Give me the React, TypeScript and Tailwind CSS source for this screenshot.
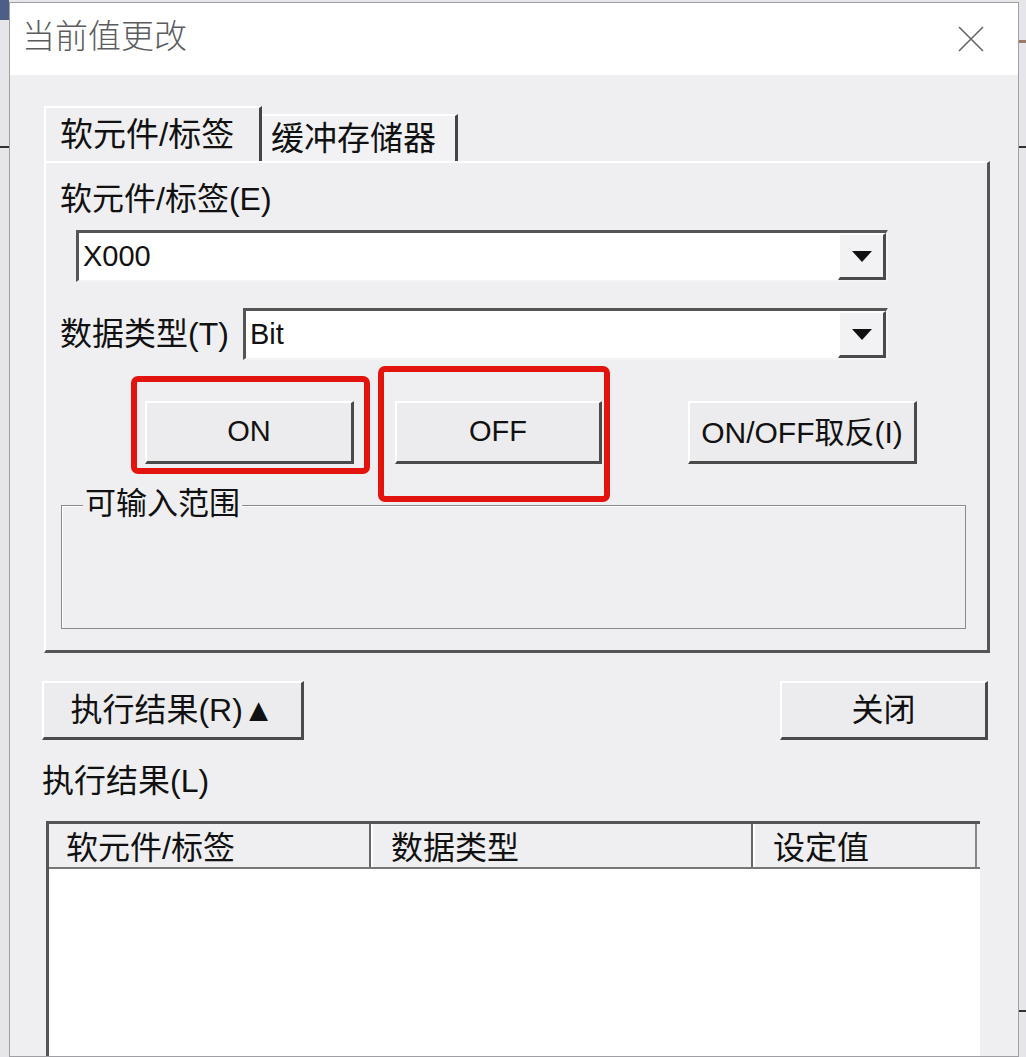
import React from 'react'

// ── Bevel helpers ─────────────────────────────────────────────

const raised = 'border-t-2 border-l-2 border-b-[3px] border-r-[3px] border-t-white border-l-white border-b-[#4a4a4a] border-r-[#4a4a4a]'
const sunken = 'border-t-[3px] border-l-[3px] border-b-2 border-r-2 border-t-[#555] border-l-[#555] border-b-[#f4f4f6] border-r-[#f4f4f6]'

const font = "font-['Liberation_Sans','Noto_Sans_CJK_SC',sans-serif]"

function Btn({ label, className }: { label: React.ReactNode; className: string }) {
  return (
    <div className={`flex items-center justify-center bg-[#ececee] text-[#111] ${raised} ${className}`}>
      {label}
    </div>
  )
}

function Combo({ value, className }: { value: string; className: string }) {
  return (
    <div className={`flex items-stretch bg-white ${sunken} ${className}`}>
      <div className="flex-1 flex items-center pl-[4px] text-[29px] text-[#111]">{value}</div>
      <div className={`w-[48px] flex items-center justify-center bg-[#f2f2f4] ${raised}`}>
        <svg width="20" height="11" viewBox="0 0 20 11"><path d="M0 0 H20 L10 11 Z" fill="#111" /></svg>
      </div>
    </div>
  )
}

// ── Dialog ────────────────────────────────────────────────────

export default function App() {
  return (
    <div className={`relative w-[1026px] h-[1057px] overflow-hidden bg-[#e6e6ea] pl-[9px] pr-[7px] pt-[2px] ${font}`}>
      {/* bits of the window behind */}
      <div className="absolute left-0 top-[146px] w-[9px] h-[2px] bg-[#333]" />
      <div className="absolute right-0 top-[40px] w-[7px] h-[3px] bg-[#9a7a6a]" />
      <div className="absolute right-0 top-[146px] w-[7px] h-[2px] bg-[#333]" />
      <div className="absolute right-0 top-[1010px] w-[7px] h-[2px] bg-[#333]" />
      <div className="absolute left-0 top-0 w-[9px] h-[20px] bg-[#4d5f86]" />

      <div className="h-full flex flex-col border border-[#a0a0a4] bg-[#efeff1]">
        {/* Title bar */}
        <div className="h-[72px] shrink-0 bg-white flex items-center justify-between pl-[12px] pr-[34px]">
          <span className="text-[33px] font-light text-[#5c5c60] pb-[4px]">当前值更改</span>
          <svg width="26" height="26" viewBox="0 0 26 26"><path d="M1 1 L25 25 M25 1 L1 25" stroke="#666" strokeWidth="1.6" /></svg>
        </div>

        <div className="flex-1 flex flex-col pl-[32px] pr-[30px] pt-[31px]">
          {/* Tabs */}
          <div className="flex items-end ml-[2px] h-[55px]">
            <div className="h-[55px] w-[218px] flex items-center pl-[14px] border-t-2 border-l-2 border-r-[3px] border-t-white border-l-white border-r-[#444] bg-[#efeff1] text-[33px] text-[#111]">
              软元件/标签
            </div>
            <div className="h-[47px] w-[196px] flex items-center pl-[9px] border-t-2 border-r-[3px] border-t-white border-r-[#444] bg-[#f2f2f4] text-[33px] text-[#111]">
              缓冲存储器
            </div>
          </div>

          {/* Tab panel */}
          <div className="ml-[2px] w-[946px] h-[492px] shrink-0 flex flex-col border-t-2 border-l-2 border-r-[3px] border-b-[3px] border-t-white border-l-white border-r-[#555] border-b-[#555] pt-[18px] pl-[14px] text-[#111]">
            <div className="h-[36px] leading-[36px] text-[32px]">软元件/标签(E)</div>
            <Combo value="X000" className="mt-[13px] ml-[16px] w-[812px] h-[52px]" />

            <div className="mt-[26px] flex items-center h-[52px]">
              <div className="w-[183px] text-[32px]">数据类型(T)</div>
              <Combo value="Bit" className="w-[645px] h-[52px]" />
            </div>

            <div className="mt-[41px] flex items-center pl-[85px] h-[63px]">
              <Btn label={<span className="text-[29px]">ON</span>} className="w-[209px] h-[63px]" />
              <Btn label={<span className="text-[29px]">OFF</span>} className="ml-[41px] w-[207px] h-[63px]" />
              <Btn label={<span className="text-[30px]">ON/OFF取反(I)</span>} className="ml-[86px] w-[229px] h-[63px]" />
            </div>

            {/* Group box */}
            <div className="relative mt-[41px] ml-[1px] w-[905px] h-[124px] border border-[#8a8a8e] shadow-[inset_1px_1px_0_#fff]">
              <span className="absolute left-[21px] top-[-20px] px-[2px] bg-[#efeff1] text-[31px] leading-[36px]">可输入范围</span>
            </div>
          </div>

          {/* Bottom buttons */}
          <div className="mt-[28px] flex items-center justify-between h-[59px]">
            <Btn label={<span className="text-[32px]">执行结果(R)▲</span>} className="w-[262px] h-[59px]" />
            <Btn label={<span className="text-[32px]">关闭</span>} className="w-[208px] h-[59px]" />
          </div>

          <div className="mt-[21px] h-[40px] leading-[40px] text-[32px] text-[#111]">执行结果(L)</div>

          {/* Result list */}
          <div className="mt-[20px] ml-[4px] w-[934px] flex-1 flex flex-col border-t-[3px] border-l-[3px] border-t-[#555] border-l-[#555] bg-white">
            <div className="h-[45px] flex bg-[#efeff1] border-b-2 border-b-[#777] text-[32px] text-[#111]">
              <div className="w-[322px] pl-[17px] flex items-end leading-[38px] border-r-2 border-r-[#666] overflow-hidden">软元件/标签</div>
              <div className="w-[382px] pl-[18px] flex items-end leading-[38px] border-l-2 border-l-white border-r-2 border-r-[#666] overflow-hidden">数据类型</div>
              <div className="w-[224px] pl-[18px] flex items-end leading-[38px] border-l-2 border-l-white border-r-2 border-r-[#888] overflow-hidden">设定值</div>
            </div>
            <div className="flex-1 bg-white" />
          </div>
        </div>
      </div>

      {/* Red annotation frames */}
      <div className="absolute left-[131px] top-[376px] w-[239px] h-[98px] border-[6px] border-[#e3140e] rounded-[7px]" />
      <div className="absolute left-[378px] top-[366px] w-[232px] h-[136px] border-[6px] border-[#e3140e] rounded-[7px]" />
    </div>
  )
}
